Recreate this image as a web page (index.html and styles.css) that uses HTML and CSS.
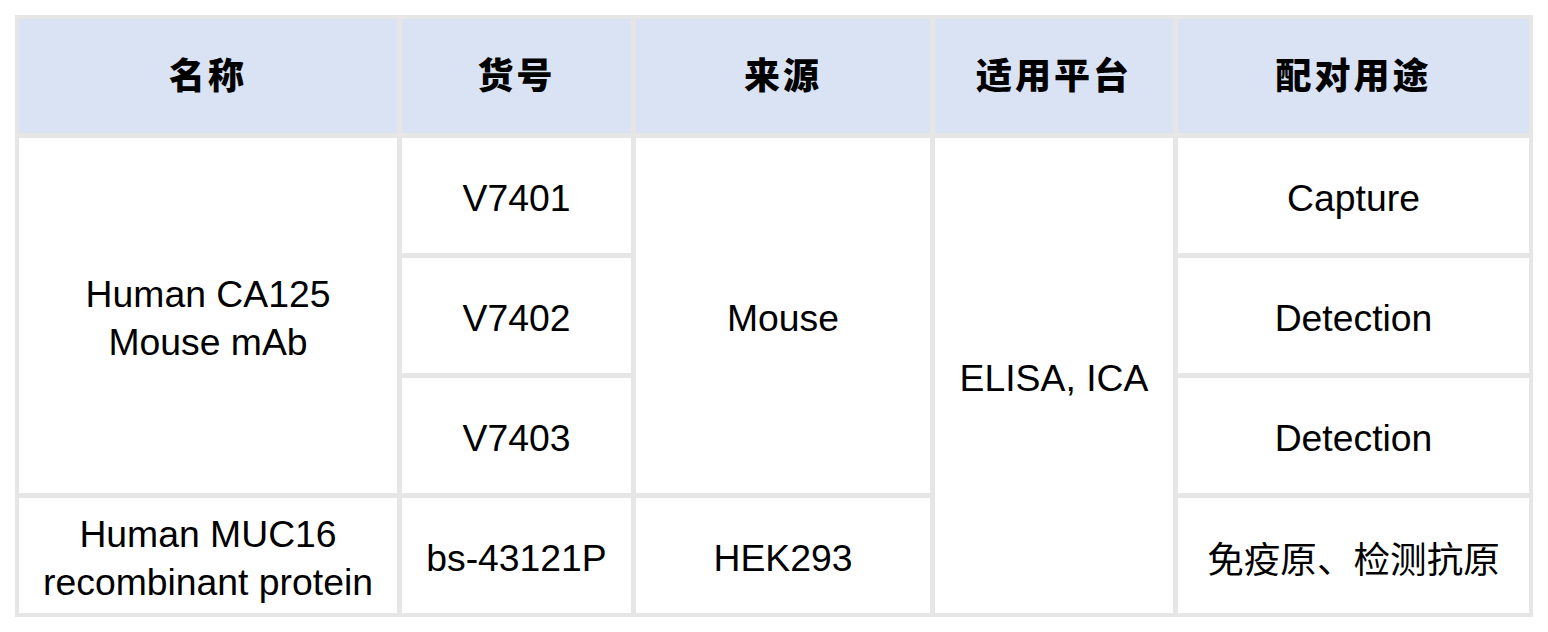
FILE: index.html
```html
<!DOCTYPE html>
<html lang="zh-CN">
<head>
<meta charset="utf-8">
<title>CA125</title>
<link rel="stylesheet" href="styles.css">
</head>
<body>
<div class="table">
  <div class="cell head">名称</div>
  <div class="cell head">货号</div>
  <div class="cell head">来源</div>
  <div class="cell head">适用平台</div>
  <div class="cell head">配对用途</div>

  <div class="cell span3">Human CA125<br>Mouse mAb</div>
  <div class="cell">V7401</div>
  <div class="cell span3">Mouse</div>
  <div class="cell span4">ELISA, ICA</div>
  <div class="cell">Capture</div>

  <div class="cell">V7402</div>
  <div class="cell">Detection</div>

  <div class="cell">V7403</div>
  <div class="cell">Detection</div>

  <div class="cell">Human MUC16<br>recombinant protein</div>
  <div class="cell">bs-43121P</div>
  <div class="cell">HEK293</div>
  <div class="cell cjk">免疫原、检测抗原</div>
</div>
</body>
</html>
```

FILE: styles.css
```css
html, body {
  margin: 0;
  padding: 0;
  background: #ffffff;
}

body {
  padding: 15px;
  font-family: "Liberation Sans", Arial, "Noto Sans CJK SC", sans-serif;
  color: #000000;
}

.table {
  display: grid;
  width: 1518px;
  box-sizing: border-box;
  grid-template-columns: 378px 229px 294px 238px 351px;
  grid-template-rows: 114px 115px 115px 115px 115px;
  gap: 5px;
  padding: 4px;
  background: #e7e6e6;
}

.cell {
  background: #ffffff;
  display: flex;
  align-items: center;
  justify-content: center;
  text-align: center;
  font-size: 37.33px;
  line-height: 48px;
  padding-top: 4px;
}

.head {
  background: #dae3f3;
  font-family: "Noto Sans CJK SC", sans-serif;
  font-weight: 900;
  font-size: 36px;
  letter-spacing: 3px;
  padding-top: 0;
  padding-bottom: 6px;
}

.span3 {
  grid-row: span 3;
}

.span4 {
  grid-row: span 4;
}

.cjk {
  font-family: "Noto Sans CJK SC", sans-serif;
  font-size: 36.6px;
}
```
